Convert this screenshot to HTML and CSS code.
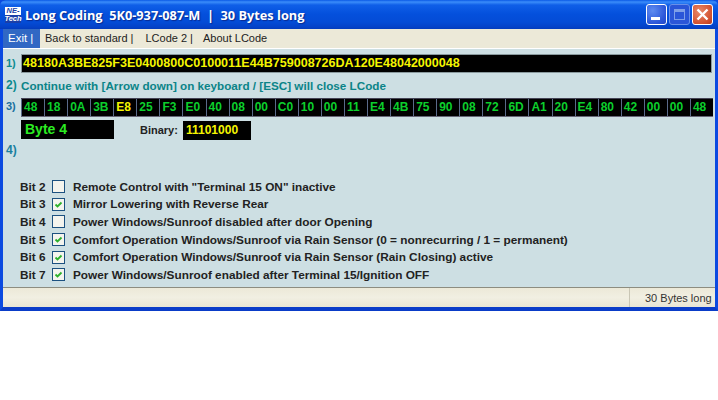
FILE: index.html
```html
<!DOCTYPE html>
<html lang="en">
<head>
<meta charset="utf-8">
<title>Long Coding</title>
<link rel="stylesheet" href="styles.css">
</head>
<body>
<div class="window">
  <header class="titlebar">
    <div class="logo"><span>NE-</span><span>Tech</span></div>
    <div class="title">Long Coding  5K0-937-087-M  |  30 Bytes long</div>
    <div class="controls">
      <div class="btn btn-min"><svg width="21" height="21" viewBox="0 0 21 21"><rect x="5" y="13" width="9" height="3" fill="#fff"/></svg></div>
      <div class="btn btn-max"><svg width="21" height="21" viewBox="0 0 21 21"><rect x="5.5" y="5.5" width="10" height="10" fill="none" stroke="#7f9fe8"/><rect x="5" y="5" width="11" height="3" fill="#7f9fe8"/></svg></div>
      <div class="btn btn-close"><svg width="21" height="21" viewBox="0 0 21 21"><path d="M5.5 5.5 15.5 15.5M15.5 5.5 5.5 15.5" stroke="#fff" stroke-width="2.4" fill="none"/></svg></div>
    </div>
  </header>
  <nav class="menu">
    <div class="menu-item active">Exit |</div>
    <div class="menu-item">Back to standard |</div>
    <div class="menu-item">LCode 2 |</div>
    <div class="menu-item">About LCode</div>
  </nav>
  <main class="content">
    <div class="row row-1">
      <span class="num">1)</span>
      <div class="code">48180A3BE825F3E0400800C0100011E44B759008726DA120E48042000048</div>
    </div>
    <div class="row row-2">
      <span class="num">2)</span>
      <span class="hint">Continue with [Arrow down] on keyboard / [ESC] will close LCode</span>
    </div>
    <div class="row row-3">
      <span class="num">3)</span>
      <div class="bytes">
        <span>48</span><span>18</span><span>0A</span><span>3B</span><span class="sel">E8</span><span>25</span><span>F3</span><span>E0</span><span>40</span><span>08</span><span>00</span><span>C0</span><span>10</span><span>00</span><span>11</span><span>E4</span><span>4B</span><span>75</span><span>90</span><span>08</span><span>72</span><span>6D</span><span>A1</span><span>20</span><span>E4</span><span>80</span><span>42</span><span>00</span><span>00</span><span>48</span>
      </div>
    </div>
    <div class="byte-row">
      <div class="byte-name">Byte 4</div>
      <div class="binary-label">Binary:</div>
      <div class="binary">11101000</div>
    </div>
    <div class="row row-4"><span class="num">4)</span></div>
    <div class="bits">
      <div class="bit"><span class="bit-name">Bit 2</span><span class="check"></span><span class="bit-text">Remote Control with "Terminal 15 ON" inactive</span></div>
      <div class="bit"><span class="bit-name">Bit 3</span><span class="check on"><svg width="11" height="11" viewBox="0 0 11 11"><path d="M2.5 5.5 4.5 7.5 8.5 3.5" fill="none" stroke="#2cb02c" stroke-width="1.8"/></svg></span><span class="bit-text">Mirror Lowering with Reverse Rear</span></div>
      <div class="bit"><span class="bit-name">Bit 4</span><span class="check"></span><span class="bit-text">Power Windows/Sunroof disabled after door Opening</span></div>
      <div class="bit"><span class="bit-name">Bit 5</span><span class="check on"><svg width="11" height="11" viewBox="0 0 11 11"><path d="M2.5 5.5 4.5 7.5 8.5 3.5" fill="none" stroke="#2cb02c" stroke-width="1.8"/></svg></span><span class="bit-text">Comfort Operation Windows/Sunroof via Rain Sensor (0 = nonrecurring / 1 = permanent)</span></div>
      <div class="bit"><span class="bit-name">Bit 6</span><span class="check on"><svg width="11" height="11" viewBox="0 0 11 11"><path d="M2.5 5.5 4.5 7.5 8.5 3.5" fill="none" stroke="#2cb02c" stroke-width="1.8"/></svg></span><span class="bit-text">Comfort Operation Windows/Sunroof via Rain Sensor (Rain Closing) active</span></div>
      <div class="bit"><span class="bit-name">Bit 7</span><span class="check on"><svg width="11" height="11" viewBox="0 0 11 11"><path d="M2.5 5.5 4.5 7.5 8.5 3.5" fill="none" stroke="#2cb02c" stroke-width="1.8"/></svg></span><span class="bit-text">Power Windows/Sunroof enabled after Terminal 15/Ignition OFF</span></div>
    </div>
  </main>
  <footer class="status">
    <div class="status-main"></div>
    <div class="status-right">30 Bytes long</div>
  </footer>
</div>
</body>
</html>
```
FILE: styles.css
```css
html, body { margin: 0; padding: 0; background: #fff; }
body { width: 718px; height: 400px; overflow: hidden; font-family: "Liberation Sans", Arial, sans-serif; }
.window {
  width: 718px; height: 311px; box-sizing: border-box;
  display: flex; flex-direction: column;
  background: #0a3fd0;
  border-left: 3px solid #0b4ae0; border-right: 3px solid #0b4ae0; border-bottom: 4px solid #0a3cc8;
}
.titlebar {
  height: 29px; flex: none; margin: 0 -3px; padding: 0 4px 0 5px;
  display: flex; align-items: center;
  background: linear-gradient(#0a5ae6 0, #3b8dfa 2px, #0f5fe8 5px, #0450dc 14px, #044cd6 22px, #0442c8 27px, #033cbc 29px);
  border-radius: 6px 6px 0 0;
}
.logo {
  width: 16px; height: 16px; flex: none; margin-top: 1px;
  background: linear-gradient(#fff 50%, #1b3fa8 50%);
  display: flex; flex-direction: column; align-items: center;
  font: italic bold 7.5px/8px "Liberation Sans", sans-serif;
}
.logo span:first-child { color: #1b3fa8; }
.logo span:last-child { color: #fff; }
.title {
  margin-left: 4px; white-space: pre; color: #fff;
  font: bold 12.75px "Open Sans", sans-serif;
  text-shadow: 1px 1px 1px #0a2a90;
}
.controls { margin-left: auto; display: flex; gap: 2px; padding-right: 1px; margin-top: -1px; }
.btn { width: 21px; height: 21px; box-sizing: border-box; border: 1px solid #fff; border-radius: 3px; display: flex; overflow: hidden; }
.btn svg { flex: none; margin: -1px; }
.btn-min { background: radial-gradient(circle at 30% 30%, #5f8cf0, #2a55d8 70%, #2348c8); }
.btn-max { background: #2a55d8; border-color: #6a8fe8; }
.btn-close { background: radial-gradient(circle at 35% 35%, #e88a6a, #d2512f 70%, #b53a20); }
.menu {
  height: 19px; flex: none; display: flex; align-items: center;
  background: #ece9d8; font-size: 11px; color: #222; line-height: 19px;
}
.menu-item { padding: 0 6px 0 5px; white-space: nowrap; }
.menu-item:nth-child(2) { padding-left: 5px; padding-right: 7px; }
.menu-item:nth-child(3) { padding-left: 5px; padding-right: 5px; }
.menu-item.active { background: #3168c4; color: #fff; width: 37px; box-sizing: border-box; padding: 0 0 0 5px; font-size: 11.5px; }
.content {
  flex: 1; background: #cddfe3; border-top: 1px solid #fff; min-height: 0;
  padding: 4px 3px 0 3px;
  border-bottom: 1px solid #8d8d80;
}
.row { display: flex; align-items: center; }
.num { width: 15px; flex: none; color: #0f8c90; font: bold 11px "Liberation Sans", sans-serif; }
.row-1 { height: 20px; }
.code {
  flex: 1; height: 19px; box-sizing: border-box; background: #000;
  border: 1px solid #8a9a9e; color: #f5f500; padding-left: 1px;
  font: bold 12.55px/17px "Liberation Sans", sans-serif;
}
.row-2 { height: 20px; margin-top: 2px; }
.row-2 .num { width: 15px; font-size: 12px; color: #0b8a8e; }
.hint { color: #0b8488; font-size: 11.7px; font-weight: bold; white-space: nowrap; }
.row-3 { height: 19px; margin-top: 3px; margin-right: -1px; }
.row-3 .num { font-size: 11px; margin-top: -3px; color: #1a6f9e; }
.bytes {
  flex: 1; display: grid; grid-template-columns: repeat(30, 1fr); height: 19px; box-sizing: border-box;
  background: #000; border-top: 1px solid #445; border-bottom: 1px solid #667;
}
.bytes span {
  color: #0ccf2c; font: bold 12px/17px "Liberation Sans", sans-serif; padding-left: 2px;
  border-left: 1px solid #5a6a8a;
}
.bytes span.sel { color: #f5f500; }
.byte-row { display: flex; align-items: flex-start; margin-top: 3px; padding-left: 15px; }
.byte-name {
  width: 93px; height: 19px; background: #000; color: #2cec22; padding-left: 4px; box-sizing: border-box;
  font: bold 14px/18px "Liberation Sans", sans-serif;
}
.binary-label { margin-left: 26px; width: 43px; font: bold 11px/20px "Liberation Sans", sans-serif; color: #222; }
.binary {
  width: 68px; height: 19px; margin-top: 1px; background: #000; color: #f5f500; padding-left: 3px; box-sizing: border-box;
  font: bold 12px/19px "Liberation Sans", sans-serif;
}
.row-4 { height: 14px; margin-top: 3px; }
.row-4 .num { color: #1a7f9e; font-size: 12px; }
.bits { margin-top: 21px; display: flex; flex-direction: column; }
.bit { height: 17.6px; display: flex; align-items: center; font: bold 11.8px "Liberation Sans", sans-serif; color: #222; }
.bit-name { margin-left: 14px; width: 32px; flex: none; }
.check {
  width: 13px; height: 13px; box-sizing: border-box; flex: none; background: #f4f4ee;
  border: 1px solid #1c5180; display: flex; align-items: center; justify-content: center;
}
.check svg { flex: none; }
.bit-text { margin-left: 8px; white-space: nowrap; }
.status {
  height: 19px; flex: none; display: flex; background: linear-gradient(#ece9d8, #f1efe2 50%, #e8e5d4);
  font-size: 11px; color: #333;
}
.status-main { flex: 1; border-right: 1px solid #c9c6b5; }
.status-right { width: 85px; box-sizing: border-box; padding-left: 15px; line-height: 20px; white-space: nowrap; }
```
